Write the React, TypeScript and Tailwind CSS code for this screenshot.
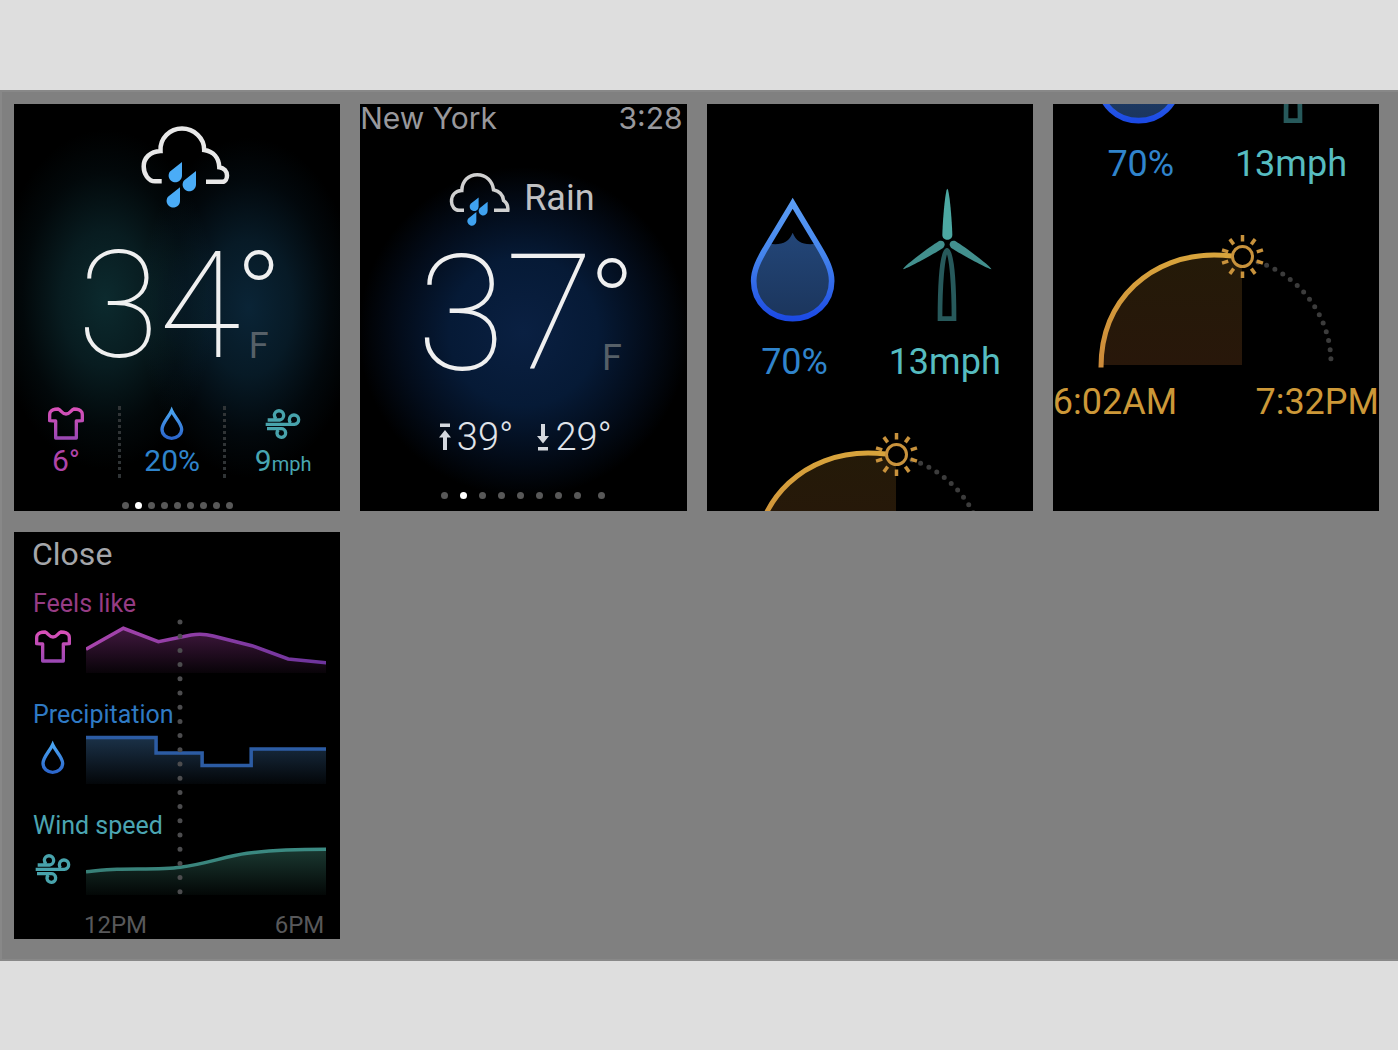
import React from 'react';

const CARD_CLASS = 'bg-black h-[407px] flex flex-col overflow-hidden';

const RAIN_DROP = 'M42 38V51.5A6.7 6.7 0 1 1 30 47.5Z';

const RainIcon = () => (
  <svg width="90" height="84" viewBox="0 0 90 84" fill="none" className="shrink-0">
    <path
      d="M21.7 57.3H15C8.4 57.3 3.7 50 3.7 42.5C3.7 34 10 27.5 20.5 27C19.8 14 30 4.6 42 4.6S64.4 14 64.2 26C73.5 27.5 79 34 79.3 43.2C84 43.8 87 47.5 87 51.5C87 54.5 85.5 57.8 82.5 57.8H66"
      stroke="#e8e8e8"
      strokeWidth="4.5"
    />
    <g fill="#4aacf7">
      <path d={RAIN_DROP} />
      <path d={RAIN_DROP} transform="translate(14 9)" />
      <path d={RAIN_DROP} transform="translate(-2 25.3)" />
    </g>
  </svg>
);

const SmallRainIcon = () => (
  <svg width="62" height="56" viewBox="0 0 62 56" fill="none" className="shrink-0">
    <path
      d="M16 40.3H11C6.5 40.3 3.5 36 3.5 31.5C3.5 25 7.5 20.9 13.8 20.6C14 11 20.5 4.8 29.3 4.8S44.5 11 45.5 19.8C52 21.3 55 25 55.6 30.5C58.5 32.5 60.3 36 59.8 40.3H46"
      stroke="#d0d0d0"
      strokeWidth="3.5"
    />
    <g fill="#3fa2f0">
      <path d={RAIN_DROP} transform="translate(2.5 2) scale(.67)" />
      <path d={RAIN_DROP} transform="translate(11.5 6.3) scale(.67)" />
      <path d={RAIN_DROP} transform="translate(.2 16.6) scale(.67)" />
    </g>
  </svg>
);

const ShirtIcon = () => (
  <svg width="36" height="35" viewBox="54 35 108 105" fill="none" className="shrink-0">
    <defs>
      <linearGradient id="shirt" x1="0" y1="0" x2="0" y2="1">
        <stop offset="0" stopColor="#d850b8" />
        <stop offset="1" stopColor="#9c48b4" />
      </linearGradient>
    </defs>
    <path
      d="M84 44C93 46 96 59 108 59S123 46 132 44C142 44 152 48 155 53Q157 56 157 62V79L139 80V131H77V80L59 79V62Q59 56 61 53C64 48 74 44 84 44Z"
      stroke="url(#shirt)"
      strokeWidth="10"
      strokeLinejoin="round"
    />
  </svg>
);

const DropIcon = () => (
  <svg width="24" height="35" viewBox="478 348 72 105" fill="none" className="shrink-0">
    <defs>
      <linearGradient id="drop" x1="0" y1="0" x2="0" y2="1">
        <stop offset="0" stopColor="#4aa4f0" />
        <stop offset="1" stopColor="#2c66cc" />
      </linearGradient>
    </defs>
    <path
      d="M513 362C504 382 484 400 484 418C484 434 497 445 513 445S543 434 543 418C543 400 522 382 513 362Z"
      stroke="url(#drop)"
      strokeWidth="10"
    />
  </svg>
);

const WindIcon = () => (
  <svg width="36" height="35" viewBox="138 35 108 105" fill="none" className="shrink-0">
    <g stroke="#48a3ac" strokeWidth="10">
      <path d="M146 77H182A14 14 0 1 0 166 62Q166 68 171 73" />
      <path d="M140 90H226A14 14 0 1 0 211 76Q211 82 215 86" />
      <path d="M144 103H186A13 13 0 1 1 174 117Q174 111 178 107" />
    </g>
  </svg>
);

const ArrowIcon = ({ down = false }) => (
  <svg width="12" height="30" viewBox="0 0 12 30" className="shrink-0" fill="#d4d8de">
    {down ? (
      <path d="M4 2H8V14H12L6 21.5L0 14H4ZM1 25H11V28.5H1Z" />
    ) : (
      <path d="M1 1.5H11V5H1ZM6 8L12 15.5H8V28H4V15.5H0Z" />
    )}
  </svg>
);

const BigDrop = () => (
  <svg width="86" height="128" viewBox="150 44 258 384" fill="none">
    <defs>
      <linearGradient id="bigDrop" x1="0" y1="0" x2="0" y2="1">
        <stop offset="0" stopColor="#5a9cf4" />
        <stop offset=".45" stopColor="#4484ec" />
        <stop offset="1" stopColor="#1c4ae4" />
      </linearGradient>
      <linearGradient id="water" x1="0" y1="0" x2="0" y2="1">
        <stop offset="0" stopColor="#234678" />
        <stop offset="1" stopColor="#1b355c" />
      </linearGradient>
    </defs>
    <path
      d="M206 193C245 198 266 190 278 160C290 190 311 198 350 193C380 245 395 272 395 305C395 370 343 418 278 418S161 370 161 305C161 272 176 245 206 193Z"
      fill="url(#water)"
    />
    <path
      d="M278 72L200 202C176 242 161 272 161 305C161 370 213 418 278 418S395 370 395 305C395 272 380 242 356 202Z"
      stroke="url(#bigDrop)"
      strokeWidth="17"
    />
  </svg>
);

const WindTurbine = () => (
  <svg width="90" height="134" viewBox="606 24 270 402" fill="none">
    <path d="M742 26C736 28 728 120 727 165C727 184 757 184 757 165C756 120 748 28 742 26Z" fill="#4ca8a2" />
    <path d="M609 268C606 262 690 200 716 184C730 178 740 192 730 203C710 217 625 264 609 268Z" fill="#42908e" />
    <path d="M874 268C877 262 793 200 767 184C753 178 743 192 753 203C773 217 858 264 874 268Z" fill="#42908e" />
    <path d="M720 416C720 330 726 214 741 211C756 214 762 330 762 416Z" stroke="#27595b" strokeWidth="14" />
  </svg>
);

const RAY_ANGLES = [0, 36, 72, 108, 144, 180, 216, 252, 288, 324];

const SunArc = () => (
  <svg width="242" height="138" viewBox="0 0 242 138" fill="none" className="mx-auto mt-12 shrink-0">
    <defs>
      <linearGradient id="arc" x1="0" y1="0" x2="0" y2="1">
        <stop offset="0" stopColor="#d8a43c" />
        <stop offset="1" stopColor="#cc8a3a" />
      </linearGradient>
      <linearGradient id="day" x1="0" y1="0" x2="0" y2="1">
        <stop offset="0" stopColor="#241a08" />
        <stop offset="1" stopColor="#28170a" />
      </linearGradient>
    </defs>
    <path d="M7 133A114 110 0 0 1 147 26V133Z" fill="url(#day)" />
    <path
      d="M163 30C205 44 236 84 236 131"
      stroke="#3c3c3c"
      strokeWidth="5"
      strokeLinecap="round"
      strokeDasharray="0 9.2"
    />
    <path d="M6 135.5C6 66 58 23 119 23Q128 23 137 24" stroke="url(#arc)" strokeWidth="5" />
    <g stroke="#c8923c" strokeWidth="3">
      <circle cx="147.5" cy="24.5" r="10" fill="#000000" />
      {RAY_ANGLES.map((angle) => (
        <path key={angle} d="M147.5 9.5V3" strokeWidth="3.5" transform={`rotate(${angle} 147.5 24.5)`} />
      ))}
    </g>
  </svg>
);

const PageDots = ({ className }: { className: string }) => (
  <div className={`flex justify-center mt-auto ${className}`}>
    {Array.from({ length: 9 }, (_, i) => (
      <span key={i} className={`w-[7px] h-[7px] rounded-full ${i === 1 ? 'bg-white' : 'bg-[#585858]'}`} />
    ))}
  </div>
);

const Temperature = ({ value, className }: { value: string; className: string }) => (
  <div className={`flex justify-center leading-36 font-[140] text-[#f0f0f0] ${className}`}>
    <span>{value}</span>
    <span className="w-9 flex flex-col justify-between items-center">
      <span className="text-[126px] leading-32 h-16 font-extralight">°</span>
      <span className="text-4xl leading-14 font-normal text-[#566068]">F</span>
    </span>
  </div>
);

const GlanceCard = () => (
  <section
    className={`${CARD_CLASS} pt-5 pb-[2px] bg-[radial-gradient(ellipse_110px_170px_at_28%_48%,#0c2a2e,#081c20_40%,#02080a_75%,transparent),radial-gradient(ellipse_110px_170px_at_72%_50%,#0a2436,#071a26_40%,#02080c_75%,transparent)] bg-blend-screen`}
  >
    <div className="flex justify-center pl-4">
      <RainIcon />
    </div>
    <Temperature value="34" className="mt-[26px] h-35 text-[149px]" />
    <div className="grid grid-cols-[104fr_108fr_114fr] mt-8 h-[72px] text-3xl leading-8">
      <div className="flex flex-col items-center gap-1 text-[#b044a8]">
        <ShirtIcon />
        <span>6°</span>
      </div>
      <div className="flex flex-col items-center gap-1 text-[#2f84cc] border-x-3 border-dotted border-[#303436]">
        <DropIcon />
        <span>20%</span>
      </div>
      <div className="flex flex-col items-center gap-1 text-[#48a6b2]">
        <WindIcon />
        <span>
          9<span className="text-xl">mph</span>
        </span>
      </div>
    </div>
    <PageDots className="gap-[6px]" />
  </section>
);

const RainCard = () => (
  <section
    className={`${CARD_CLASS} pb-3 bg-[radial-gradient(circle_165px_at_50%_56%,#0a2042,#061a36_45%,#030c1a_75%,transparent)]`}
  >
    <header className="flex justify-between pr-1 font-[Inter,sans-serif] text-3xl leading-7 text-[#98989c]">
      <span>New York</span>
      <span>3:28</span>
    </header>
    <div className="flex justify-center items-center gap-[14px] mt-[38px] pr-1 text-4xl text-[#c0c0c2]">
      <SmallRainIcon />
      <span>Rain</span>
    </div>
    <Temperature value="37" className="mt-4 h-36 text-[162px]" />
    <div className="flex justify-center mt-[31px] pl-1 text-[38px] leading-10 font-light text-[#e0e4ea]">
      <span className="flex items-center gap-[6px] mr-6">
        <ArrowIcon />
        39°
      </span>
      <span className="flex items-center gap-[6px]">
        <ArrowIcon down />
        29°
      </span>
    </div>
    <PageDots className="gap-3 *:last:ml-[5px]" />
  </section>
);

// Long scrolling page, shown at its top and at its end
const DetailContent = () => (
  <div className="shrink-0 pt-[84px] pb-[89px] text-4xl leading-10">
    <div className="grid grid-cols-[172fr_136fr] pr-[18px] justify-items-center">
      <div className="flex flex-col items-center text-[#3084cc]">
        <div className="h-[134px] flex items-end">
          <BigDrop />
        </div>
        <span className="mt-5 pl-1">70%</span>
      </div>
      <div className="flex flex-col items-center text-[#56bcc0]">
        <div className="h-[134px] flex items-end">
          <WindTurbine />
        </div>
        <span className="mt-5 pr-1">13mph</span>
      </div>
    </div>
    <SunArc />
    <div className="flex justify-between mt-3 text-[#cc9838]">
      <span>6:02AM</span>
      <span>7:32PM</span>
    </div>
  </div>
);

const CHARTS = [
  {
    id: 'feels',
    label: 'Feels like',
    textClass: 'text-[#963c84]',
    icon: <ShirtIcon />,
    line: 'M0 25.3L37.3 4.3L72.3 17.7L105 11Q116 9 127 12L165.7 21.7L202 35L240 38.7',
    from: '#a844ac',
    to: '#6c349c',
    fill: '#461a44',
  },
  {
    id: 'precipitation',
    label: 'Precipitation',
    textClass: 'text-[#2f7ac4]',
    icon: <DropIcon />,
    line: 'M0 2.5H70V18H116V30.5H165V14H240',
    from: '#2c5ca4',
    to: '#2c5ca4',
    fill: '#1c344c',
  },
  {
    id: 'wind',
    label: 'Wind speed',
    textClass: 'text-[#4ba5b2]',
    icon: <WindIcon />,
    line: 'M0 25.7C12 24.5 20 23.3 31 23.3C55 22.8 80 23.5 94 21.3C120 18 140 10 161 7.3C185 4 205 3.3 240 3.3',
    from: '#388078',
    to: '#3c8c84',
    fill: '#1c3c34',
  },
];

const ForecastCard = () => (
  <section className={`${CARD_CLASS} pt-[6px]`}>
    <button className="self-start ml-[18px] text-[32px] leading-8 text-[#a4a6aa]">Close</button>
    <div className="relative flex flex-col gap-[27px] mt-5">
      {CHARTS.map((chart) => (
        <div key={chart.id}>
          <h2 className={`pl-[19px] text-[25px] leading-7 ${chart.textClass}`}>{chart.label}</h2>
          <div className="flex items-center mt-[6px] pl-[21px] pr-[14px]">
            <span className="w-9 mr-[15px] pb-[6px] flex justify-center">{chart.icon}</span>
            <svg viewBox="0 0 240 50" preserveAspectRatio="none" fill="none" className="flex-1 min-w-0 h-[50px]">
              <defs>
                <linearGradient id={`${chart.id}-line`} gradientUnits="userSpaceOnUse" x1="0" y1="0" x2="240" y2="0">
                  <stop offset="0" stopColor={chart.from} />
                  <stop offset="1" stopColor={chart.to} />
                </linearGradient>
                <linearGradient id={`${chart.id}-fill`} gradientUnits="userSpaceOnUse" x1="0" y1="0" x2="0" y2="50">
                  <stop offset="0" stopColor={chart.fill} />
                  <stop offset="1" stopColor={chart.fill} stopOpacity="0.1" />
                </linearGradient>
              </defs>
              <path d={`${chart.line}V49H0Z`} fill={`url(#${chart.id}-fill)`} />
              <path d={chart.line} stroke={`url(#${chart.id}-line)`} strokeWidth="3.5" />
            </svg>
          </div>
        </div>
      ))}
      <svg width="6" height="280" viewBox="0 0 6 280" className="absolute left-1/2 top-7">
        <path d="M3 4V280" stroke="#4c4c4e" strokeWidth="5" strokeLinecap="round" strokeDasharray="0 14.2" />
      </svg>
    </div>
    <div className="flex justify-between mt-[15px] pl-[70px] pr-4 text-2xl leading-7 text-[#58585a]">
      <span>12PM</span>
      <span>6PM</span>
    </div>
  </section>
);

const App = () => {
  return (
    <div className="min-h-screen bg-[#dedede] pt-[90px] font-[Roboto,sans-serif]">
      <main className="grid grid-cols-2 lg:grid-cols-4 gap-x-5 gap-y-[21px] bg-[#808080] border-y-2 border-l-2 border-[#888888] pt-3 pr-[19px] pb-5 pl-3">
        <GlanceCard />
        <RainCard />
        <section className={CARD_CLASS}>
          <DetailContent />
        </section>
        <section className={`${CARD_CLASS} justify-end`}>
          <DetailContent />
        </section>
        <ForecastCard />
      </main>
    </div>
  );
};

export default App;
